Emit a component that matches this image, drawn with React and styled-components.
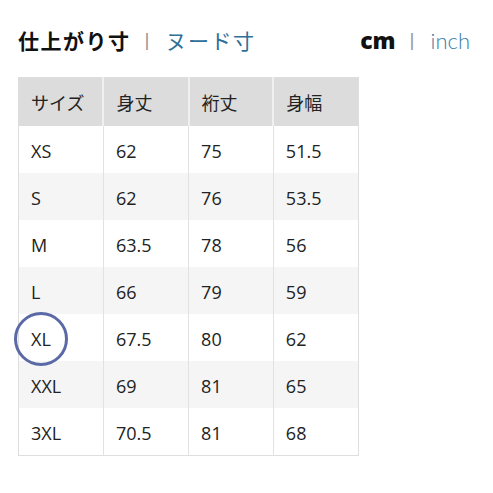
import React from 'react';
import styled, { createGlobalStyle } from 'styled-components';

const GlobalStyle = createGlobalStyle`
  body {
    margin: 0;
    background: #ffffff;
    font-family: "Open Sans", "Noto Sans", "Noto Sans CJK JP", sans-serif;
    color: #222;
  }
`;

const rows = [
  ['XS', '62', '75', '51.5'],
  ['S', '62', '76', '53.5'],
  ['M', '63.5', '78', '56'],
  ['L', '66', '79', '59'],
  ['XL', '67.5', '80', '62'],
  ['XXL', '69', '81', '65'],
  ['3XL', '70.5', '81', '68'],
];

const App = () => {
  return (
    <>
      <GlobalStyle />
      <Pagina>
        <Cabecera>
          <Grupo>
            <Opcion activa>仕上がり寸</Opcion>
            <Separador>|</Separador>
            <Opcion>ヌード寸</Opcion>
          </Grupo>
          <Grupo>
            <Unidad activa>cm</Unidad>
            <Separador>|</Separador>
            <Unidad>inch</Unidad>
          </Grupo>
        </Cabecera>
        <Tabla>
          <thead>
            <tr>
              <Th>サイズ</Th>
              <Th>身丈</Th>
              <Th>裄丈</Th>
              <Th>身幅</Th>
            </tr>
          </thead>
          <tbody>
            {rows.map((r, i) => (
              <Fila key={r[0]} gris={i % 2 === 1}>
                {r.map((c, j) => (
                  <Td key={j}>
                    {j === 0 && c === 'XL' ? <Marcado>{c}</Marcado> : c}
                  </Td>
                ))}
              </Fila>
            ))}
          </tbody>
        </Tabla>
      </Pagina>
    </>
  );
};

export default App;

const Pagina = styled.div`
  width: 493px;
  height: 493px;
  padding: 24px 23px 0 18px;
  box-sizing: border-box;
`;

const Cabecera = styled.div`
  display: flex;
  justify-content: space-between;
  align-items: center;
  height: 32px;
  margin-bottom: 21px;
`;

const Grupo = styled.div`
  display: flex;
  align-items: center;
`;

const Opcion = styled.span`
  font-size: 21px;
  font-weight: ${p => (p.activa ? 700 : 400)};
  color: ${p => (p.activa ? '#111' : '#2f6f98')};
  font-family: "Noto Sans CJK JP", sans-serif;
  letter-spacing: 1.5px;
`;

const Unidad = styled.span`
  font-size: ${p => (p.activa ? '23px' : '22px')};
  font-weight: ${p => (p.activa ? 800 : 300)};
  color: ${p => (p.activa ? '#111' : '#3b7da5')};
  font-family: ${p => (p.activa ? '"Open Sans"' : 'Lato')}, sans-serif;
`;

const Separador = styled.span`
  color: #999;
  font-size: 19px;
  margin: 0 16px 0 14px;
  font-family: "Liberation Sans", sans-serif;
`;

const Tabla = styled.table`
  border-collapse: collapse;
  width: 341px;
  border: 1px solid #dedede;
`;

const Th = styled.th`
  background: #dcdcdc;
  height: 48px;
  text-align: left;
  padding: 0 0 0 12px;
  font-weight: 400;
  font-size: 18px;
  color: #222;
  border-right: 2px solid #f0f0f0;
  font-family: "Noto Sans CJK JP", sans-serif;
  &:last-child { border-right: none; }
`;

const Fila = styled.tr`
  background: ${p => (p.gris ? '#f5f5f5' : '#ffffff')};
`;

const Td = styled.td`
  height: 44px;
  padding: 3px 0 0 12px;
  font-size: 18px;
  color: #222;
  border-right: 1px solid #e2e2e2;
  width: 73px;
  &:last-child { border-right: none; }
`;

const Marcado = styled.span`
  position: relative;
  display: inline-block;

  &::after {
    content: '';
    position: absolute;
    left: 50%;
    top: 50%;
    width: 48px;
    height: 48px;
    margin: -27px 0 0 -27px;
    border: 3px solid #5b6aa6;
    border-radius: 50%;
  }
`;
